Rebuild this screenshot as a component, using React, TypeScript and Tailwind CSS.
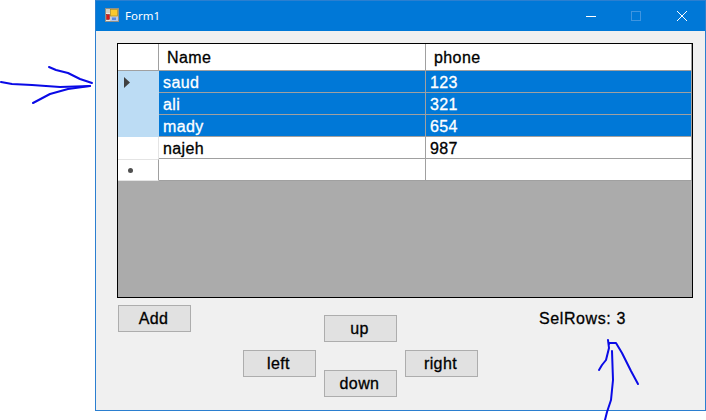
const rows = [
  { name: "saud", phone: "123", selected: true, current: true },
  { name: "ali", phone: "321", selected: true },
  { name: "mady", phone: "654", selected: true },
  { name: "najeh", phone: "987", selected: false },
];

function FormIcon() {
  return (
    <svg width="14" height="14" viewBox="0 0 14 14" className="mb-[2px] shrink-0">
      <rect x="0.5" y="0.5" width="13" height="13" fill="#d4d0c4" stroke="#909088" />
      <rect x="1" y="5" width="4" height="8" fill="#eceae2" />
      <rect x="1.5" y="6.5" width="3" height="5" fill="#d81818" stroke="#801010" strokeWidth="0.5" />
      <rect x="5.5" y="1.5" width="7" height="6.5" fill="#fbc92c" stroke="#a88a20" strokeWidth="0.7" />
      <rect x="6" y="9" width="7" height="4" fill="#b4c8ec" />
      <rect x="7" y="9.5" width="4" height="2.5" fill="#5a88dc" />
    </svg>
  );
}

function WinButton({ label, className }: { label: string; className: string }) {
  return (
    <button className={`h-[27px] w-[73px] border border-[#adadad] bg-[#e1e1e1] pr-[2px] text-[16px] leading-none tracking-[0.4px] text-black [-webkit-text-stroke:0.3px_black] ${className}`}>
      {label}
    </button>
  );
}

function Annotations() {
  return (
    <svg width="706" height="420" viewBox="0 0 706 420" fill="none" stroke="#0a0ae6" strokeWidth="2" strokeLinecap="round" strokeLinejoin="round" className="pointer-events-none absolute top-0 left-0">
      <path d="M1 82 L12 84 L32 85 L60 87 L90 86" />
      <path d="M49 67 L56 70 L68 73 L80 79 L92 83" />
      <path d="M33 103 L50 94 L68 89 L90 86" />
      <path d="M608 340 L609 348 L606 360 L602 365 L599 370" />
      <path d="M609 344 L609 343 L616 343 L622 353 L631 371 L638 384" />
      <path d="M612 351 L613 380 L611 400 L607 412 L605 420" />
    </svg>
  );
}

export default function App() {
  return (
    <div className="relative h-[420px] w-[706px] overflow-hidden bg-white font-['Liberation_Sans',Arial,sans-serif]">
      <div className="ml-[95px] flex h-[411px] w-[611px] flex-col border border-[#2b7fd0] bg-[#f0f0f0]">
        <div className="flex h-[30px] shrink-0 items-center bg-[#0078d7] pl-[9px] text-white">
          <FormIcon />
          <span className="ml-[6px] font-['Noto_Sans',sans-serif] text-[11.5px]">Form1</span>
          <div className="ml-auto flex h-full items-center">
            <div className="mr-[35px] h-px w-[10px] bg-white" />
            <div className="mr-[36px] h-[10px] w-[10px] border border-[#3f95e0]" />
            <svg width="10" height="10" viewBox="0 0 10 10" stroke="white" className="mr-[18px]">
              <path d="M0 0 L10 10 M10 0 L0 10" />
            </svg>
          </div>
        </div>

        <div className="mt-3 mr-[12px] ml-[21px] flex h-[255px] flex-col border border-black bg-[#ababab] text-[16px] leading-none tracking-[0.4px] [-webkit-text-stroke:0.3px]">
          <div className="flex h-[27px] border-b border-[#a0a0a0] bg-white text-black">
            <div className="w-[41px] border-r border-[#a0a0a0]" />
            <div className="flex w-[267px] items-center border-r border-[#a0a0a0] pt-[2px] pl-2">Name</div>
            <div className="flex flex-1 items-center border-r border-[#a0a0a0] pt-[2px] pl-2">phone</div>
          </div>
          {rows.map((row) => (
            <div key={row.name} className="flex h-[22px]">
              <div className={`flex w-[41px] items-center pl-[6px] ${row.selected ? "bg-[#bcdcf4]" : "border-r border-[#e4e4e4] bg-white"}`}>
                {row.current && (
                  <svg width="6" height="11" viewBox="0 0 6 11" className="fill-[#404040]">
                    <path d="M0 0 L6 5.5 L0 11 Z" />
                  </svg>
                )}
              </div>
              <div className={`flex w-[267px] items-center border-r border-b border-[#a0a0a0] pt-[2px] pl-1 ${row.selected ? "bg-[#0078d7] text-white" : "bg-white text-black"}`}>
                {row.name}
              </div>
              <div className={`flex flex-1 items-center border-r border-b border-[#a0a0a0] pt-[2px] pl-1 ${row.selected ? "bg-[#0078d7] text-white" : "bg-white text-black"}`}>
                {row.phone}
              </div>
            </div>
          ))}
          <div className="flex h-[22px]">
            <div className="flex w-[41px] items-center border-y border-r border-y-[#e4e4e4] border-r-[#a0a0a0] bg-white pl-[10px]">
              <span className="h-[5px] w-[5px] rounded-full bg-[#505050]" />
            </div>
            <div className="w-[267px] border-r border-b border-[#a0a0a0] bg-white" />
            <div className="flex-1 border-r border-b border-[#a0a0a0] bg-white" />
          </div>
        </div>

        <div className="relative flex flex-1 pl-[22px]">
          <WinButton label="Add" className="mt-[7px]" />
          <div className="mt-[17px] ml-[52px] grid grid-cols-[73px_73px_73px] gap-x-2">
            <WinButton label="left" className="col-start-1 row-start-1 mt-[35px]" />
            <div className="col-start-2 row-start-1 flex flex-col gap-7">
              <WinButton label="up" className="" />
              <WinButton label="down" className="" />
            </div>
            <WinButton label="right" className="col-start-3 row-start-1 mt-[35px]" />
          </div>
          <span className="mt-[13px] ml-[61px] text-[16px] leading-none tracking-[0.6px] text-black [-webkit-text-stroke:0.3px_black]">SelRows: 3</span>
        </div>
      </div>
      <Annotations />
    </div>
  );
}
